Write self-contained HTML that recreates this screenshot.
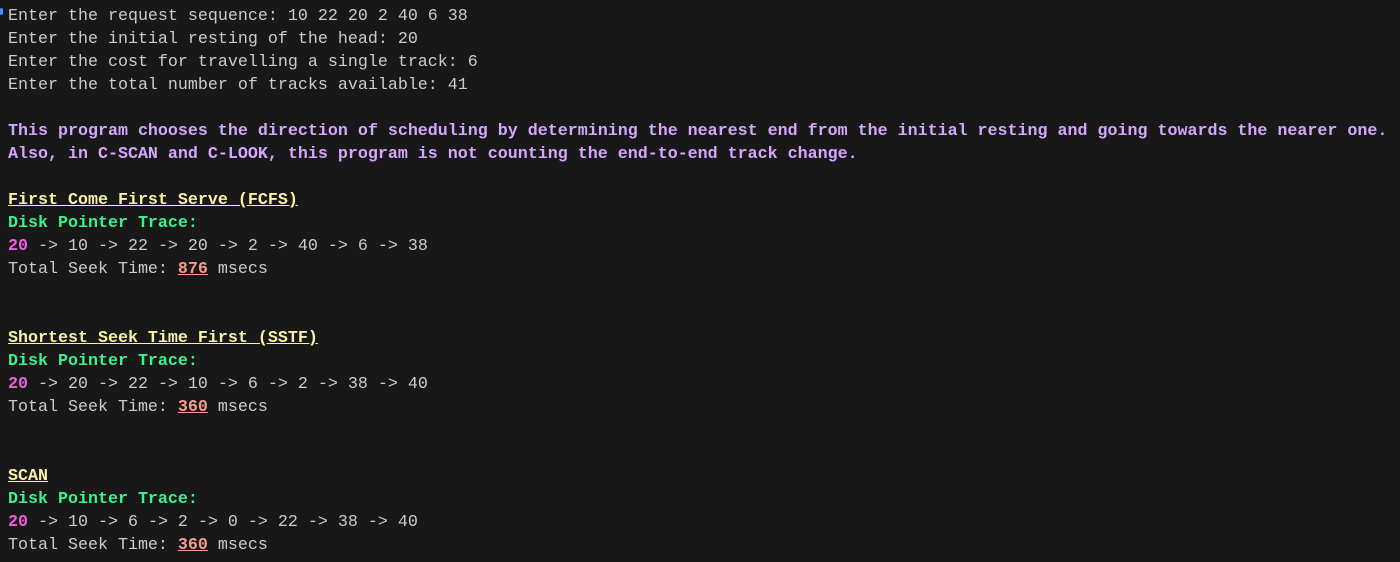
<!DOCTYPE html>
<html><head><style>
html,body{margin:0;background:#181818;width:1400px;height:562px;overflow:hidden}
pre{margin:0;position:absolute;left:8px;top:5px;font-family:"Liberation Mono",monospace;font-size:16.67px;line-height:23px;color:#cccccc}
.p{color:#d6a6ff;font-weight:bold}
.y{color:#f9f1a5;font-weight:bold;text-decoration:underline}
.g{color:#3bf28e;font-weight:bold}
.m{color:#f05fe0;font-weight:bold}
.r{color:#f89a8f;font-weight:bold;text-decoration:underline}
.dot{position:absolute;left:0;top:8px;width:3px;height:7px;background:#3794ff;border-radius:2px}
</style></head><body>
<div class="dot"></div>
<pre>Enter the request sequence: 10 22 20 2 40 6 38
Enter the initial resting of the head: 20
Enter the cost for travelling a single track: 6
Enter the total number of tracks available: 41

<span class="p">This program chooses the direction of scheduling by determining the nearest end from the initial resting and going towards the nearer one.</span>
<span class="p">Also, in C-SCAN and C-LOOK, this program is not counting the end-to-end track change.</span>

<span class="y">First Come First Serve (FCFS)</span>
<span class="g">Disk Pointer Trace:</span>
<span class="m">20</span> -&gt; 10 -&gt; 22 -&gt; 20 -&gt; 2 -&gt; 40 -&gt; 6 -&gt; 38
Total Seek Time: <span class="r">876</span> msecs


<span class="y">Shortest Seek Time First (SSTF)</span>
<span class="g">Disk Pointer Trace:</span>
<span class="m">20</span> -&gt; 20 -&gt; 22 -&gt; 10 -&gt; 6 -&gt; 2 -&gt; 38 -&gt; 40
Total Seek Time: <span class="r">360</span> msecs


<span class="y">SCAN</span>
<span class="g">Disk Pointer Trace:</span>
<span class="m">20</span> -&gt; 10 -&gt; 6 -&gt; 2 -&gt; 0 -&gt; 22 -&gt; 38 -&gt; 40
Total Seek Time: <span class="r">360</span> msecs</pre>
</body></html>
